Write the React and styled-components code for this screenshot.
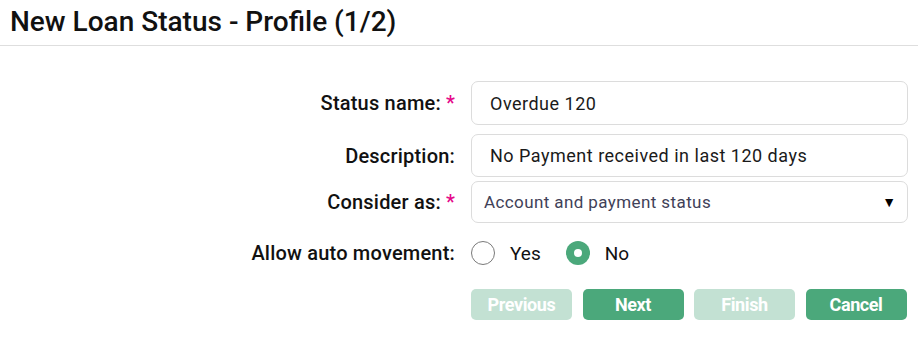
import React from "react";
import styled, { createGlobalStyle } from "styled-components";

const Global = createGlobalStyle`
  html, body { margin: 0; padding: 0; background: #fff; }
  body { font-family: Roboto, "Noto Sans", "Liberation Sans", sans-serif; color: #111; }
  * { box-sizing: border-box; }
`;

const Page = styled.div`
  width: 918px;
  height: 337px;
  background: #fff;
`;

const Header = styled.header`
  height: 46px;
  border-bottom: 1px solid #dedede;
  display: flex;
  align-items: center;
  padding: 0 0 3px 10px;
`;

const Title = styled.h1`
  margin: 0;
  font-size: 28px;
  font-weight: 500;
  color: #111;
`;

const Form = styled.div`
  display: flex;
  flex-direction: column;
  padding-right: 10px;
`;

const Row = styled.div`
  display: grid;
  grid-template-columns: 1fr 437px;
  column-gap: 16px;
  align-items: center;
  margin-top: ${(p) => p.$top}px;
  min-height: ${(p) => p.$h}px;
`;

const Label = styled.label`
  text-align: right;
  font-size: 20px;
  font-weight: 500;
  color: #111;
  letter-spacing: 0.2px;
`;

const Req = styled.span`
  color: #e5098a;
  margin-left: 5px;
`;

const Input = styled.div`
  height: ${(p) => p.$h}px;
  border: 1px solid #dcdcdc;
  border-radius: 7px;
  display: flex;
  align-items: center;
  padding: 0 ${(p) => p.$pad}px;
  font-size: ${(p) => p.$size || 18}px;
  letter-spacing: ${(p) => p.$ls || 0.5}px;
  color: ${(p) => p.$color || "#1a1a1a"};
  justify-content: space-between;
`;

const Arrow = styled.span`
  font-size: 14px;
  color: #000;
  margin-right: -1px;
  letter-spacing: 0;
`;

const RadioGroup = styled.div`
  display: flex;
  align-items: center;
`;

const RadioItem = styled.label`
  display: flex;
  align-items: center;
  font-size: 19px;
  color: #111;
  margin-right: 25px;
`;

const Circle = styled.span`
  width: 24px;
  height: 24px;
  border-radius: 50%;
  border: ${(p) => (p.$on ? "none" : "1px solid #7a7a7a")};
  background: ${(p) => (p.$on ? "#4ba87b" : "#fff")};
  display: inline-flex;
  align-items: center;
  justify-content: center;
  margin-right: 15px;
  &::after {
    content: "";
    width: 8px;
    height: 8px;
    border-radius: 50%;
    background: #fff;
    display: ${(p) => (p.$on ? "block" : "none")};
  }
`;

const Buttons = styled.div`
  display: grid;
  grid-template-columns: repeat(4, 101px);
  column-gap: 10.5px;
`;

const Button = styled.button`
  height: 31px;
  border: none;
  border-radius: 5px;
  font-family: inherit;
  font-size: 18px;
  font-weight: 700;
  letter-spacing: -0.4px;
  color: #fff;
  background: ${(p) => (p.disabled ? "#c3e1d3" : "#4ba87b")};
  padding: 0;
`;

export default function App() {
  return (
    <Page>
      <Global />
      <Header>
        <Title>New Loan Status - Profile (1/2)</Title>
      </Header>
      <Form>
        <Row $top={35} $h={43}>
          <Label>
            Status name:<Req>*</Req>
          </Label>
          <Input $h={44} $pad={18}>Overdue 120</Input>
        </Row>
        <Row $top={9} $h={43}>
          <Label>Description:</Label>
          <Input $h={43} $pad={18}>No Payment received in last 120 days</Input>
        </Row>
        <Row $top={4} $h={42}>
          <Label>
            Consider as:<Req>*</Req>
          </Label>
          <Input $h={42} $pad={12} $size={17} $ls={0.4} $color="#414158">
            <span>Account and payment status</span>
            <Arrow>▼</Arrow>
          </Input>
        </Row>
        <Row $top={10} $h={40}>
          <Label>Allow auto movement:</Label>
          <RadioGroup>
            <RadioItem>
              <Circle />
              Yes
            </RadioItem>
            <RadioItem>
              <Circle $on />
              No
            </RadioItem>
          </RadioGroup>
        </Row>
        <Row $top={16} $h={31}>
          <span />
          <Buttons>
            <Button disabled>Previous</Button>
            <Button>Next</Button>
            <Button disabled>Finish</Button>
            <Button>Cancel</Button>
          </Buttons>
        </Row>
      </Form>
    </Page>
  );
}
